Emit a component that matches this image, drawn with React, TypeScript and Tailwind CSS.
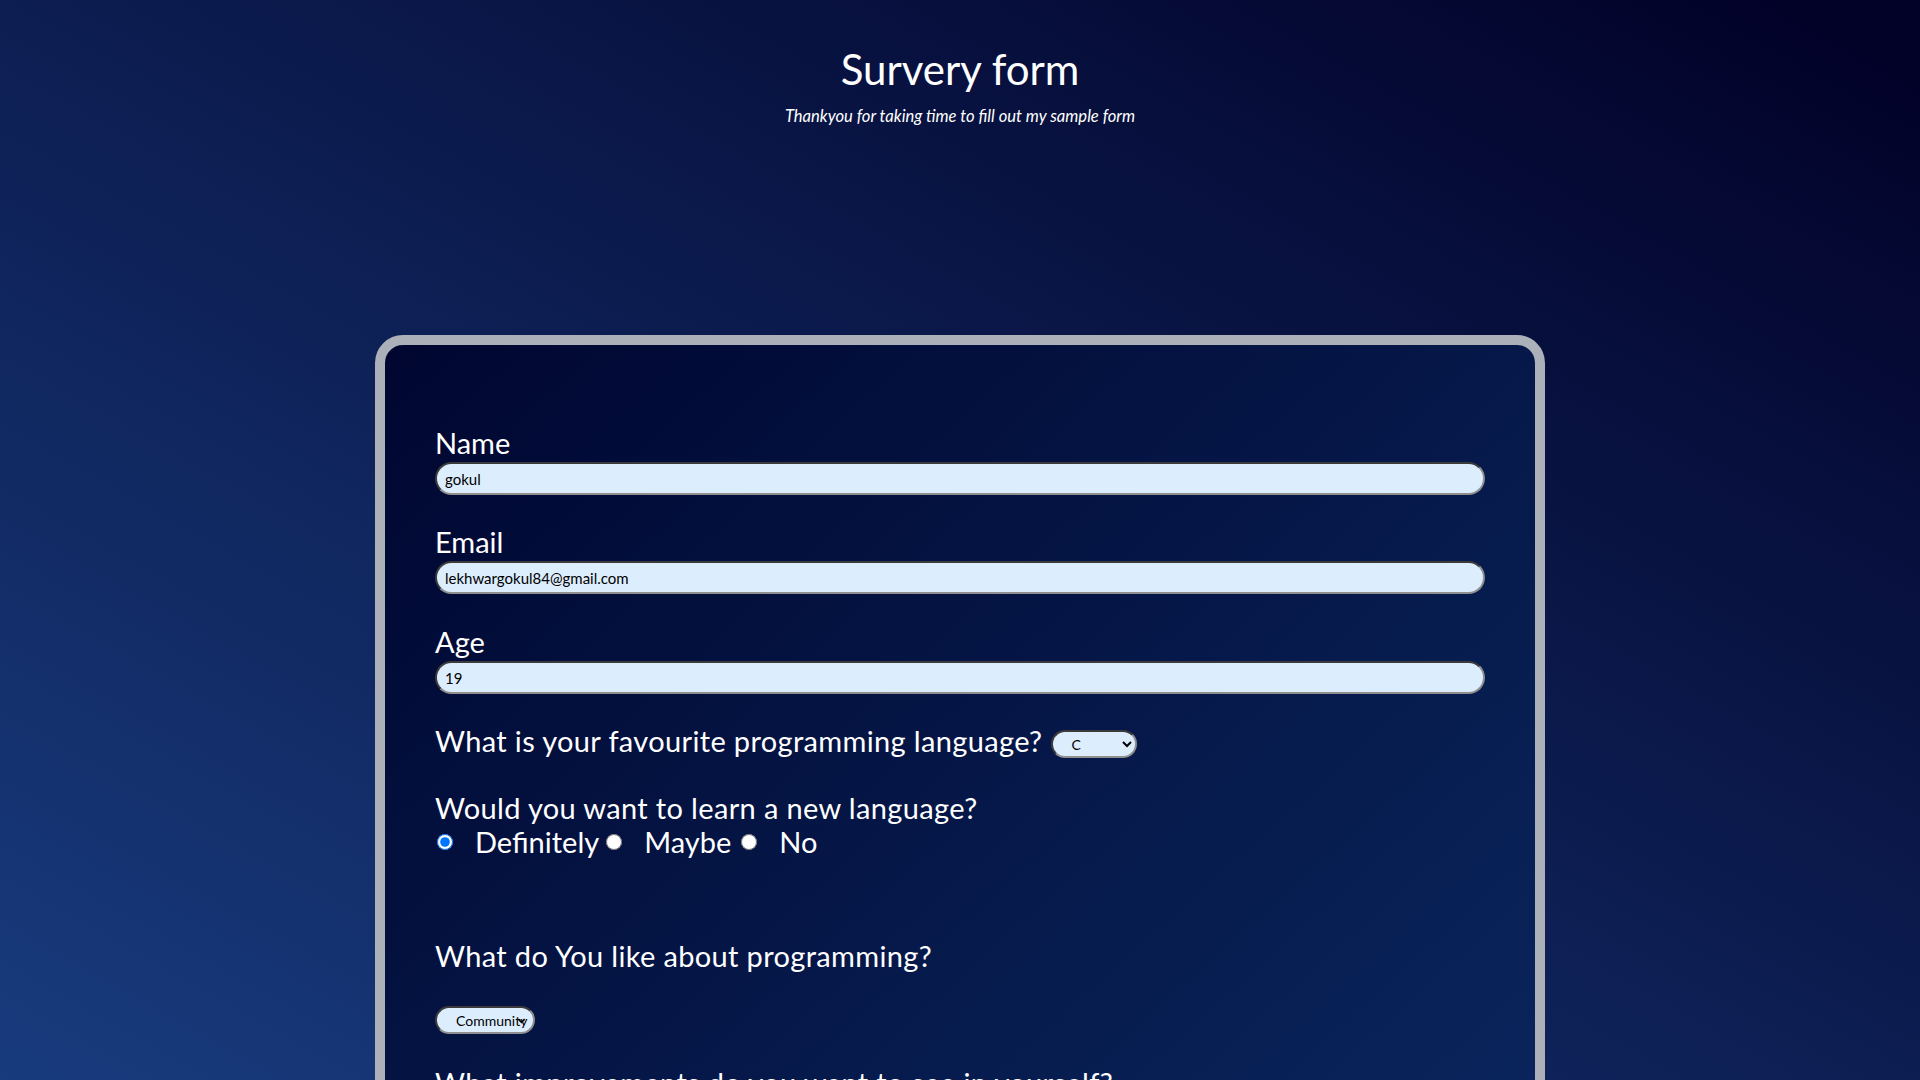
import React from 'react';

const fieldInput =
  'block w-full h-[33px] rounded-full bg-[#dcedfe] border-2 [border-style:inset] border-[#8f8f8f] px-[8px] text-[15px] text-black outline-none';

const selectBox =
  'h-[28px] rounded-full bg-[#dcedfe] border-2 [border-style:inset] border-[#8f8f8f] text-[14px] text-black outline-none';

const App: React.FC = () => {
  return (
    <div
      className="min-h-screen bg-fixed bg-[linear-gradient(to_top_right,#183b7d,#010026)] text-white pb-20"
      style={{ fontFamily: 'Lato, "Open Sans", "Noto Sans", sans-serif' }}
    >
      {/* Header */}
      <header className="pt-[44px] text-center">
        <h1 className="text-[42px] leading-[50px]">Survery form</h1>
        <p className="mt-[10px] text-[16.6px] leading-[24px] italic">
          Thankyou for taking time to fill out my sample form
        </p>
      </header>

      {/* Form card */}
      <form
        className="mx-auto mt-[207px] w-[1170px] rounded-[28px] border-[10px] border-[#acb0b8] bg-[linear-gradient(to_bottom_right,#000630,#0b2a62)] px-[50px] pt-[82px] pb-[80px]"
        onSubmit={(e) => e.preventDefault()}
      >
        <label className="block text-[29px] leading-[32px]" htmlFor="name">Name</label>
        <input id="name" type="text" defaultValue="gokul" className={`mt-[3px] ${fieldInput}`} />

        <label className="mt-[31px] block text-[29px] leading-[32px]" htmlFor="email">Email</label>
        <input id="email" type="email" defaultValue="lekhwargokul84@gmail.com" className={`mt-[3px] ${fieldInput}`} />

        <label className="mt-[32px] block text-[29px] leading-[32px]" htmlFor="age">Age</label>
        <input id="age" type="number" defaultValue="19" className={`mt-[3px] ${fieldInput}`} />

        {/* Favourite language */}
        <div className="mt-[30px] flex items-center text-[29px] leading-[32px]">
          <span className="tracking-[0.35px]">What is your favourite programming language?</span>
          <select defaultValue="C" className={`ml-[9px] mt-[6px] w-[86px] pl-[14px] pr-[4px] ${selectBox}`}>
            <option>C</option>
            <option>C++</option>
            <option>Java</option>
            <option>Python</option>
            <option>JavaScript</option>
          </select>
        </div>

        {/* New language */}
        <p className="mt-[34px] text-[29px] leading-[32px] tracking-[0.35px]">Would you want to learn a new language?</p>
        <div className="mt-[2px] flex items-center text-[29px] leading-[32px]">
          <input type="radio" name="learn" defaultChecked className="ml-[2px] h-[16px] w-[16px]" />
          <span className="ml-[22px]">Definitely</span>
          <input type="radio" name="learn" className="ml-[7px] h-[16px] w-[16px]" />
          <span className="ml-[22px]">Maybe</span>
          <input type="radio" name="learn" className="ml-[10px] h-[16px] w-[16px]" />
          <span className="ml-[22px]">No</span>
        </div>

        {/* Likes */}
        <p className="mt-[82px] text-[29px] leading-[32px] tracking-[0.35px]">What do You like about programming?</p>
        <div className="relative mt-[34px] w-[100px]">
          <select
            defaultValue="Community"
            className={`block w-full appearance-none pl-[19px] pr-[4px] ${selectBox}`}
          >
            <option>Community</option>
            <option>Problem solving</option>
            <option>Creativity</option>
            <option>Career</option>
          </select>
          <svg
            className="pointer-events-none absolute right-[9px] top-[10px] h-[9px] w-[9px] text-black"
            viewBox="0 0 10 10"
            fill="none"
            stroke="currentColor"
            strokeWidth={1.8}
          >
            <path d="M1.5 3.5 L5 7 L8.5 3.5" />
          </svg>
        </div>

        {/* Improvements */}
        <p className="mt-[33px] text-[29px] leading-[32px] tracking-[0.35px]">What improvements do you want to see in yourself?</p>
        <textarea
          rows={4}
          className="mt-[10px] block w-full rounded-[16px] bg-[#dcedfe] border-2 [border-style:inset] border-[#8f8f8f] p-[10px] text-[15px] text-black outline-none"
        />

        <button
          type="submit"
          className="mt-[30px] rounded-full bg-[#dcedfe] px-8 py-2 text-[18px] text-black"
        >
          Submit
        </button>
      </form>
    </div>
  );
};

export default App;
